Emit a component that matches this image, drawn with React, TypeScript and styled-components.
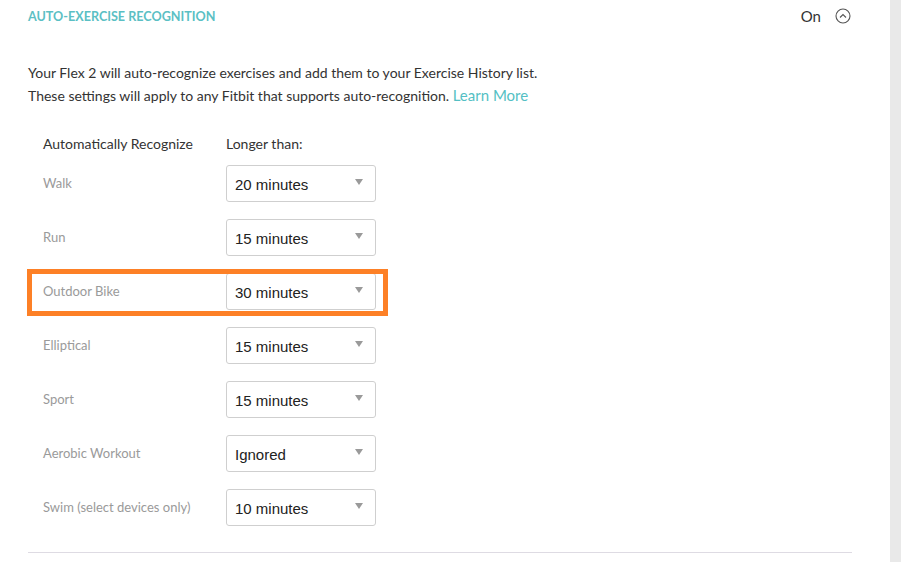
import React from "react";
import styled, { createGlobalStyle } from "styled-components";

const Global = createGlobalStyle`
  html, body { margin: 0; padding: 0; background: #fff; }
  body { font-family: Lato, "Open Sans", "Liberation Sans", sans-serif; color: #333; }
`;

const Page = styled.div`
  display: flex;
  width: 901px;
  height: 562px;
  overflow: hidden;
`;

const Main = styled.div`
  width: 890px;
  flex: none;
  padding: 0 38px 0 28px;
  box-sizing: border-box;
`;

const Gutter = styled.div`
  flex: 1;
  background: #e9e9e9;
`;

const Header = styled.div`
  display: flex;
  align-items: center;
  height: 32px;
`;

const Title = styled.h2`
  margin: 0;
  flex: 1;
  font-size: 12.6px;
  font-weight: 700;
  color: #5bbfc4;
  letter-spacing: 0;
`;

const Status = styled.span`
  font-size: 15px;
  color: #333;
  margin-right: 14px;
`;

const ToggleIcon = styled.svg`
  width: 16px;
  height: 16px;
  margin-right: 1px;
  display: block;
`;

const Description = styled.p`
  margin: 29px 0 0;
  font-size: 14px;
  line-height: 23px;
  color: #333;
`;

const Link = styled.a`
  color: #54bfc4;
  font-size: 15px;
  text-decoration: none;
`;

const Table = styled.div`
  margin-top: 24px;
  display: flex;
  flex-direction: column;
`;

const HeadRow = styled.div`
  display: grid;
  grid-template-columns: 183px 150px;
  padding: 0 0 1px 15px;
  box-sizing: border-box;
  height: 25px;
  align-items: center;
  font-size: 14px;
  color: #333;
`;

const Row = styled.div<{ $highlight?: boolean }>`
  position: relative;
  display: grid;
  grid-template-columns: 183px 150px;
  padding-left: 15px;
  height: 54px;
  align-items: center;
  ${(p) =>
    p.$highlight &&
    `
    &::after {
      content: "";
      position: absolute;
      left: -1px;
      top: 5px;
      width: 361px;
      height: 47px;
      box-sizing: border-box;
      border: 5px solid #fd8026;
      pointer-events: none;
    }
  `}
`;

const Label = styled.span`
  font-size: 13px;
  color: #9a9a9a;
`;

const Select = styled.div`
  box-sizing: border-box;
  height: 37px;
  width: 150px;
  border: 1px solid #cfcfcf;
  border-radius: 3px;
  display: flex;
  align-items: center;
  justify-content: space-between;
  padding: 2px 12px 0 8px;
  font-family: "Liberation Sans", Arial, sans-serif;
  font-size: 15px;
  color: #222;
`;

const Caret = styled.span`
  width: 0;
  height: 0;
  border-left: 4px solid transparent;
  border-right: 4px solid transparent;
  border-top: 6px solid #9a9a9a;
  margin-top: -4px;
`;

const Divider = styled.hr`
  margin: 18px 0 0;
  border: none;
  border-top: 1px solid #dedbe3;
`;

const rows: { label: string; value: string; highlight?: boolean }[] = [
  { label: "Walk", value: "20 minutes" },
  { label: "Run", value: "15 minutes" },
  { label: "Outdoor Bike", value: "30 minutes", highlight: true },
  { label: "Elliptical", value: "15 minutes" },
  { label: "Sport", value: "15 minutes" },
  { label: "Aerobic Workout", value: "Ignored" },
  { label: "Swim (select devices only)", value: "10 minutes" },
];

export default function App() {
  return (
    <Page>
      <Global />
      <Main>
        <Header>
          <Title>AUTO-EXERCISE RECOGNITION</Title>
          <Status>On</Status>
          <ToggleIcon viewBox="0 0 16 16">
            <circle cx="8" cy="8" r="7" fill="none" stroke="#555" strokeWidth="1.1" />
            <path d="M5 9.5 L8 6.5 L11 9.5" fill="none" stroke="#555" strokeWidth="1.1" />
          </ToggleIcon>
        </Header>
        <Description>
          Your Flex 2 will auto-recognize exercises and add them to your Exercise History list.
          <br />
          These settings will apply to any Fitbit that supports auto-recognition. <Link href="#">Learn More</Link>
        </Description>
        <Table>
          <HeadRow>
            <span>Automatically Recognize</span>
            <span>Longer than:</span>
          </HeadRow>
          {rows.map((r) => (
            <Row key={r.label} $highlight={r.highlight}>
              <Label>{r.label}</Label>
              <Select>
                <span>{r.value}</span>
                <Caret />
              </Select>
            </Row>
          ))}
        </Table>
        <Divider />
      </Main>
      <Gutter />
    </Page>
  );
}
